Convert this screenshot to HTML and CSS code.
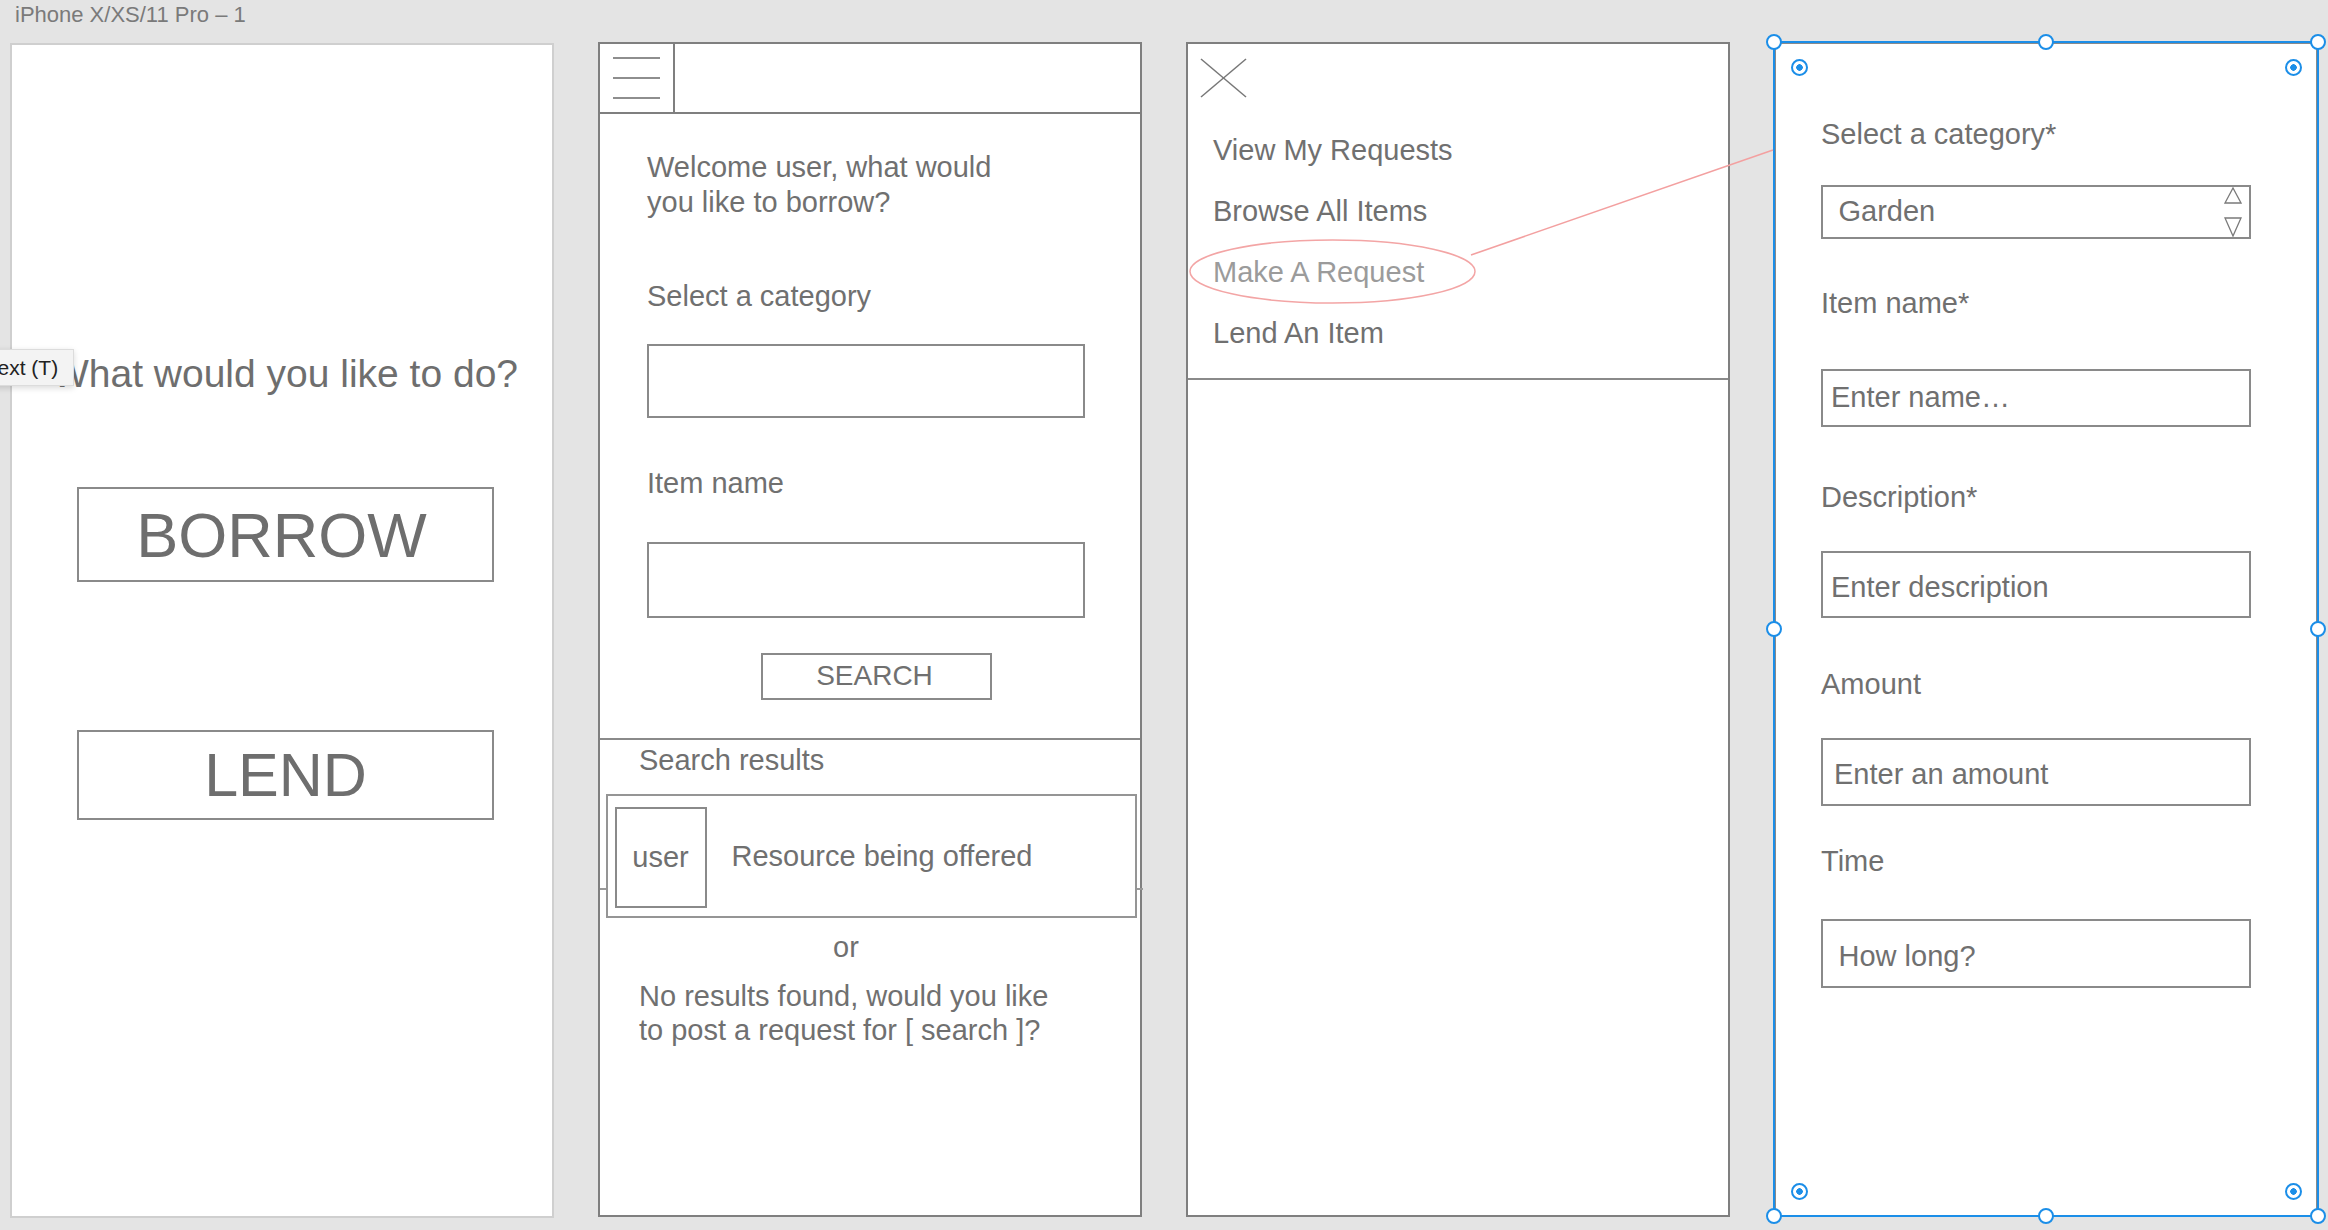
FILE: index.html
```html
<!DOCTYPE html>
<html lang="en">
<head>
<meta charset="utf-8">
<title>Wireframes</title>
<link rel="stylesheet" href="styles.css">
</head>
<body>
<div class="canvas">
  <div class="artboard-title">iPhone X/XS/11 Pro – 1</div>
  <div class="frames">
    <section class="frame frame-home">
      <h1 class="home-q">What would you like to do?</h1>
      <div class="big-btn borrow">BORROW</div>
      <div class="big-btn lend">LEND</div>
    </section>

    <section class="frame frame-search">
      <header class="top-bar">
        <div class="burger"><span></span><span></span><span></span></div>
      </header>
      <div class="search-form">
        <p class="txt welcome">Welcome user, what would<br>you like to borrow?</p>
        <p class="txt label-cat">Select a category</p>
        <div class="box box-cat"></div>
        <p class="txt label-item">Item name</p>
        <div class="box box-item"></div>
        <div class="search-btn">SEARCH</div>
      </div>
      <div class="results">
        <p class="txt results-title">Search results</p>
        <div class="result-card">
          <div class="avatar">user</div>
          <span class="resource">Resource being offered</span>
        </div>
        <p class="txt or">or</p>
        <p class="txt no-results">No results found, would you like<br>to post a request for [ search ]?</p>
      </div>
    </section>

    <section class="frame frame-menu">
      <div class="menu">
        <svg class="close" width="47" height="40" viewBox="0 0 47 40">
          <line x1="1" y1="1" x2="46" y2="39" stroke="#777" stroke-width="1.5"/>
          <line x1="46" y1="1" x2="1" y2="39" stroke="#777" stroke-width="1.5"/>
        </svg>
        <ul class="menu-list">
          <li>View My Requests</li>
          <li>Browse All Items</li>
          <li class="muted">Make A Request</li>
          <li>Lend An Item</li>
        </ul>
      </div>
    </section>

    <section class="frame frame-request">
      <div class="req-form">
        <p class="txt f-lab1">Select a category*</p>
        <div class="field f-select">
          <span class="val val-garden">Garden</span>
          <svg class="spinner" width="18" height="50" viewBox="0 0 18 50">
            <polygon points="1,16 9,1 17,16" fill="none" stroke="#7a7a7a" stroke-width="1.3"/>
            <polygon points="1,31 17,31 9,49" fill="none" stroke="#7a7a7a" stroke-width="1.3"/>
          </svg>
        </div>
        <p class="txt f-lab2">Item name*</p>
        <div class="field f-name"><span class="val">Enter name…</span></div>
        <p class="txt f-lab3">Description*</p>
        <div class="field f-desc"><span class="val">Enter description</span></div>
        <p class="txt f-lab4">Amount</p>
        <div class="field f-amount"><span class="val">Enter an amount</span></div>
        <p class="txt f-lab5">Time</p>
        <div class="field f-time"><span class="val">How long?</span></div>
      </div>
      <div class="selection">
        <i class="h h-tl"></i><i class="h h-tm"></i><i class="h h-tr"></i>
        <i class="h h-ml"></i><i class="h h-mr"></i>
        <i class="h h-bl"></i><i class="h h-bm"></i><i class="h h-br"></i>
        <i class="t t-tl"></i><i class="t t-tr"></i><i class="t t-bl"></i><i class="t t-br"></i>
      </div>
    </section>
  </div>

  <div class="tooltip">Text (T)</div>

  <svg class="annotation" width="2328" height="1230" viewBox="0 0 2328 1230">
    <ellipse cx="1332.5" cy="271.5" rx="142.5" ry="31.5" fill="none" stroke="#f3a5a5" stroke-width="1.5"/>
    <line x1="1471" y1="255" x2="1773" y2="150" stroke="#f3a0a0" stroke-width="1.5"/>
  </svg>
</div>
</body>
</html>
```

FILE: styles.css
```css
* { box-sizing: border-box; }

html, body {
  margin: 0;
  padding: 0;
  background: #e4e4e4;
}

body {
  width: 2328px;
  height: 1230px;
  overflow: hidden;
  font-family: "Liberation Sans", Arial, sans-serif;
  color: #707070;
}

.canvas {
  position: relative;
  width: 2328px;
  height: 1230px;
}

.artboard-title {
  height: 42px;
  padding: 1px 0 0 15px;
  font-size: 22px;
  line-height: 27px;
  color: #7a7a7a;
}

.frames {
  display: flex;
  align-items: flex-start;
  gap: 44px;
  padding-left: 10px;
}

.frame {
  position: relative;
  width: 544px;
  height: 1175px;
  background: #fff;
  border: 2px solid #7f7f7f;
  flex: none;
}

.txt {
  margin: 0;
  font-size: 29px;
  line-height: 35px;
}

/* ---------- frame 1 ---------- */
.frame-home {
  margin-top: 1px;
  border-color: #cfcfcf;
}

.home-q {
  margin: 306px 0 0;
  padding-left: 6px;
  font-size: 39px;
  line-height: 46px;
  font-weight: normal;
  text-align: center;
  color: #6e6e6e;
}

.big-btn {
  width: 417px;
  margin-left: 65px;
  border: 2px solid #8a8a8a;
  display: flex;
  align-items: center;
  justify-content: center;
  color: #6e6e6e;
}

.borrow {
  margin-top: 90px;
  height: 95px;
  font-size: 63px;
  padding-right: 8px;
}

.lend {
  margin-top: 148px;
  height: 90px;
  font-size: 61px;
}

/* ---------- frame 2 ---------- */
.top-bar {
  height: 70px;
  border-bottom: 2px solid #7f7f7f;
  display: flex;
}

.burger {
  width: 75px;
  height: 68px;
  border-right: 2px solid #7f7f7f;
  display: flex;
  flex-direction: column;
  justify-content: center;
  align-items: center;
  gap: 18px;
}

.burger span {
  display: block;
  width: 47px;
  height: 2px;
  background: #8e8e8e;
}

.search-form {
  padding-left: 47px;
}

.welcome { margin-top: 35.5px; }
.label-cat { margin-top: 59.3px; }
.label-item { margin-top: 47.8px; }

.box {
  width: 438px;
  border: 2px solid #8a8a8a;
}

.box-cat { margin-top: 30px; height: 74px; }
.box-item { margin-top: 41px; height: 76px; }

.search-btn {
  margin: 35px 0 0 113.5px;
  width: 231px;
  height: 47px;
  border: 2px solid #8a8a8a;
  display: flex;
  align-items: center;
  justify-content: center;
  font-size: 28px;
  padding-right: 3px;
}

.results {
  position: relative;
  margin-top: 38px;
  border-top: 2px solid #8a8a8a;
  padding-left: 39px;
}

.results::before {
  content: "";
  position: absolute;
  left: 0;
  right: -3px;
  top: 148.4px;
  height: 2px;
  background: #999;
}

.results-title { margin-top: 3px; }

.result-card {
  position: relative;
  z-index: 1;
  margin: 16px 0 0 -33.5px;
  width: 531.5px;
  height: 124px;
  border: 2px solid #959595;
  background: #fff;
  padding: 11.5px 0 0 7px;
  display: flex;
  align-items: flex-start;
}

.avatar {
  width: 92px;
  height: 101px;
  border: 2px solid #8a8a8a;
  display: flex;
  align-items: center;
  justify-content: center;
  font-size: 29px;
  line-height: 35px;
}

.resource {
  margin: 31.5px 0 0 25px;
  font-size: 29px;
  line-height: 35px;
}

.or {
  margin: 12px 0 0 194px;
}

.no-results {
  margin-top: 14.5px;
  line-height: 34px;
}

/* ---------- frame 3 ---------- */
.menu {
  border-bottom: 2px solid #8a8a8a;
  padding-bottom: 14.2px;
}

.close {
  display: block;
  margin: 14px 0 0 12px;
}

.menu-list {
  list-style: none;
  margin: 21.8px 0 0;
  padding: 0 0 0 25px;
  font-size: 29px;
  line-height: 61px;
}

.menu-list .muted { color: #9b9b9b; }

/* ---------- frame 4 ---------- */
.frame-request { border-color: #8a8a8a; }

.req-form {
  padding-left: 45px;
}

.f-lab1 { margin-top: 72.8px; }
.f-lab2 { margin-top: 47px; }
.f-lab3 { margin-top: 53px; }
.f-lab4 { margin-top: 49px; }
.f-lab5 { margin-top: 38.8px; }

.field {
  width: 430px;
  border: 2px solid #8a8a8a;
  display: flex;
  align-items: center;
  font-size: 29px;
  line-height: 35px;
}

.val { white-space: nowrap; }

.f-select { margin-top: 33px; height: 54.3px; padding-left: 15.5px; }
.f-select .spinner {
  margin-left: auto;
  margin-right: 7px;
  align-self: flex-start;
}
.f-name { margin-top: 47.6px; height: 58.3px; padding-left: 8px; }
.f-desc { margin-top: 36px; height: 66.7px; padding: 6px 0 0 8px; }
.f-amount { margin-top: 36px; height: 68px; padding: 6px 0 0 11px; }
.f-time { margin-top: 40px; height: 69px; padding: 6px 0 0 15.5px; }

/* selection overlay */
.selection {
  position: absolute;
  left: -3px;
  top: -3px;
  right: -3px;
  bottom: -2px;
  border: 2px solid #1b8ee8;
  pointer-events: none;
}

.h {
  position: absolute;
  width: 16px;
  height: 16px;
  margin: -8px 0 0 -8px;
  border: 2px solid #1b8ee8;
  border-radius: 50%;
  background: #fff;
}

.h-tl { left: -1px; top: -1px; }
.h-tm { left: 50%; top: -1px; }
.h-tr { left: calc(100% + 1px); top: -1px; }
.h-ml { left: -1px; top: 50%; }
.h-mr { left: calc(100% + 1px); top: 50%; }
.h-bl { left: -1px; top: calc(100% + 1px); }
.h-bm { left: 50%; top: calc(100% + 1px); }
.h-br { left: calc(100% + 1px); top: calc(100% + 1px); }

.t {
  position: absolute;
  width: 17px;
  height: 17px;
  margin: -8.5px 0 0 -8.5px;
  border: 2px solid #1b8ee8;
  border-radius: 50%;
  background: radial-gradient(circle, #1b8ee8 0 3px, transparent 3.5px);
}

.t-tl { left: 24px; top: 24px; }
.t-tr { left: calc(100% - 24px); top: 24px; }
.t-bl { left: 24px; top: calc(100% - 24px); }
.t-br { left: calc(100% - 24px); top: calc(100% - 24px); }

/* tooltip over frame 1 */
.tooltip {
  position: absolute;
  left: -22px;
  top: 349px;
  height: 37px;
  padding: 0 15px 0 8px;
  background: #f3f3f3;
  border: 1px solid #dcdcdc;
  box-shadow: 0 2px 6px rgba(0, 0, 0, 0.15);
  font-size: 21px;
  line-height: 35px;
  color: #222;
  white-space: nowrap;
}

/* annotation overlay */
.annotation {
  position: absolute;
  left: 0;
  top: 0;
  pointer-events: none;
}
```
